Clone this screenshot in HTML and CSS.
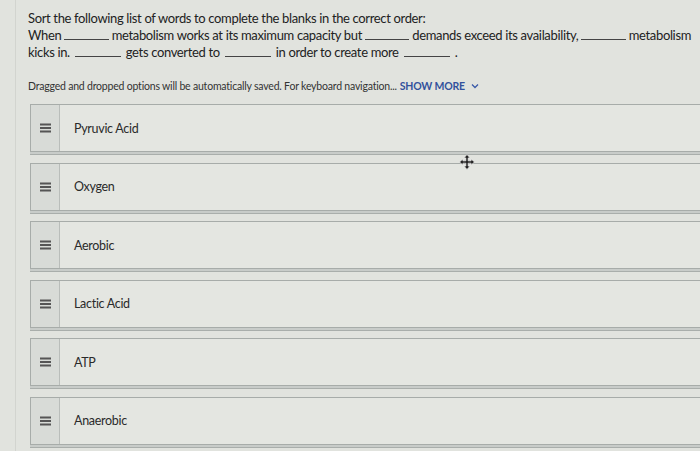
FILE: index.html
```html
<!DOCTYPE html>
<html>
<head>
<meta charset="utf-8">
<link rel="stylesheet" href="styles.css">
</head>
<body>
<div class="page">
  <div class="question">
    <div class="qline">Sort the following list of words to complete the blanks in the correct order:</div>
    <div class="qline spread">
      <span>When</span><span class="blank"></span><span>metabolism works at its maximum capacity but</span><span class="blank"></span><span>demands exceed its availability,</span><span class="blank"></span><span>metabolism</span>
    </div>
    <div class="qline tight">
      <span>kicks in.</span><span class="blank"></span><span>gets converted to</span><span class="blank"></span><span>in order to create more</span><span class="blank"></span><span>.</span>
    </div>
  </div>
  <div class="note">Dragged and dropped options will be automatically saved. For keyboard navigation... <span class="more">SHOW MORE</span>
    <svg class="chev" width="8" height="6" viewBox="0 0 8 6"><path d="M1 1.5 L4 4.5 L7 1.5" fill="none" stroke="#3a5aa8" stroke-width="1.3"/></svg>
  </div>
  <div class="list">
    <div class="item first"><div class="handle"><span class="bars"></span></div><div class="label">Pyruvic Acid</div>
      <svg class="cursor" width="16" height="16" viewBox="0 0 14 14"><path d="M7 0.5 L9.7 3.4 H8 V6 H10.6 V4.3 L13.5 7 L10.6 9.7 V8 H8 V10.6 H9.7 L7 13.5 L4.3 10.6 H6 V8 H3.4 V9.7 L0.5 7 L3.4 4.3 V6 H6 V3.4 H4.3 Z" fill="#262626" stroke="#f4f4f4" stroke-width="0.6"/></svg>
    </div>
    <div class="item"><div class="handle"><span class="bars"></span></div><div class="label">Oxygen</div></div>
    <div class="item"><div class="handle"><span class="bars"></span></div><div class="label">Aerobic</div></div>
    <div class="item"><div class="handle"><span class="bars"></span></div><div class="label">Lactic Acid</div></div>
    <div class="item"><div class="handle"><span class="bars"></span></div><div class="label">ATP</div></div>
    <div class="item"><div class="handle"><span class="bars"></span></div><div class="label">Anaerobic</div></div>
  </div>
</div>
</body>
</html>
```
FILE: styles.css
```css
html, body {
  margin: 0;
  padding: 0;
  width: 700px;
  height: 451px;
  overflow: hidden;
  background: #e1e3de;
}
.page {
  height: 451px;
  box-sizing: border-box;
  padding: 10px 0 0 12px;
  margin-left: 15px;
  font-family: "Lato", "Liberation Sans", sans-serif;
  color: #222;
  border-left: 1px solid #d2d4cf;
}
.question {
  font-size: 13px;
  letter-spacing: -0.35px;
}
.qline {
  height: 17px;
  line-height: 17px;
  white-space: nowrap;
}
.spread {
  display: flex;
  justify-content: space-between;
  width: 663px;
}
.spread .blank {
  margin: 0 3px;
}
.tight {
  display: flex;
  gap: 4px;
}
.blank {
  display: inline-block;
  width: 46px;
  height: 12px;
  border-bottom: 1px solid #444;
  margin: 0 1px;
}
.note {
  margin-top: 19px;
  font-size: 10.5px;
  letter-spacing: -0.2px;
  color: #333;
  display: flex;
  align-items: center;
  white-space: nowrap;
}
.more {
  color: #33529c;
  font-weight: bold;
  margin-left: 3px;
}
.chev {
  margin-left: 6px;
}
.list {
  margin-top: 12px;
  margin-left: 2px;
  display: flex;
  flex-direction: column;
  gap: 10.5px;
}
.item {
  position: relative;
  height: 46px;
  width: 700px;
  display: flex;
  align-items: center;
  background: #e4e6e1;
  border: 1px solid #a7aca9;
  box-shadow: 0 2px 0 #c8ccc9, 0 3px 0 #a9aeab;
}
.first {
  z-index: 2;
}
.handle {
  width: 28px;
  height: 100%;
  background: #d8dbd7;
  border-right: 1px solid #b9bdba;
  display: flex;
  align-items: center;
  justify-content: center;
}
.bars {
  display: block;
  width: 11px;
  height: 2px;
  background: #555;
  box-shadow: 0 -3.5px 0 #555, 0 3.5px 0 #555;
}
.label {
  padding-left: 14px;
  font-size: 12.5px;
  letter-spacing: -0.3px;
  color: #2a2a2a;
}
.cursor {
  position: absolute;
  left: 428px;
  top: 49px;
}
```
